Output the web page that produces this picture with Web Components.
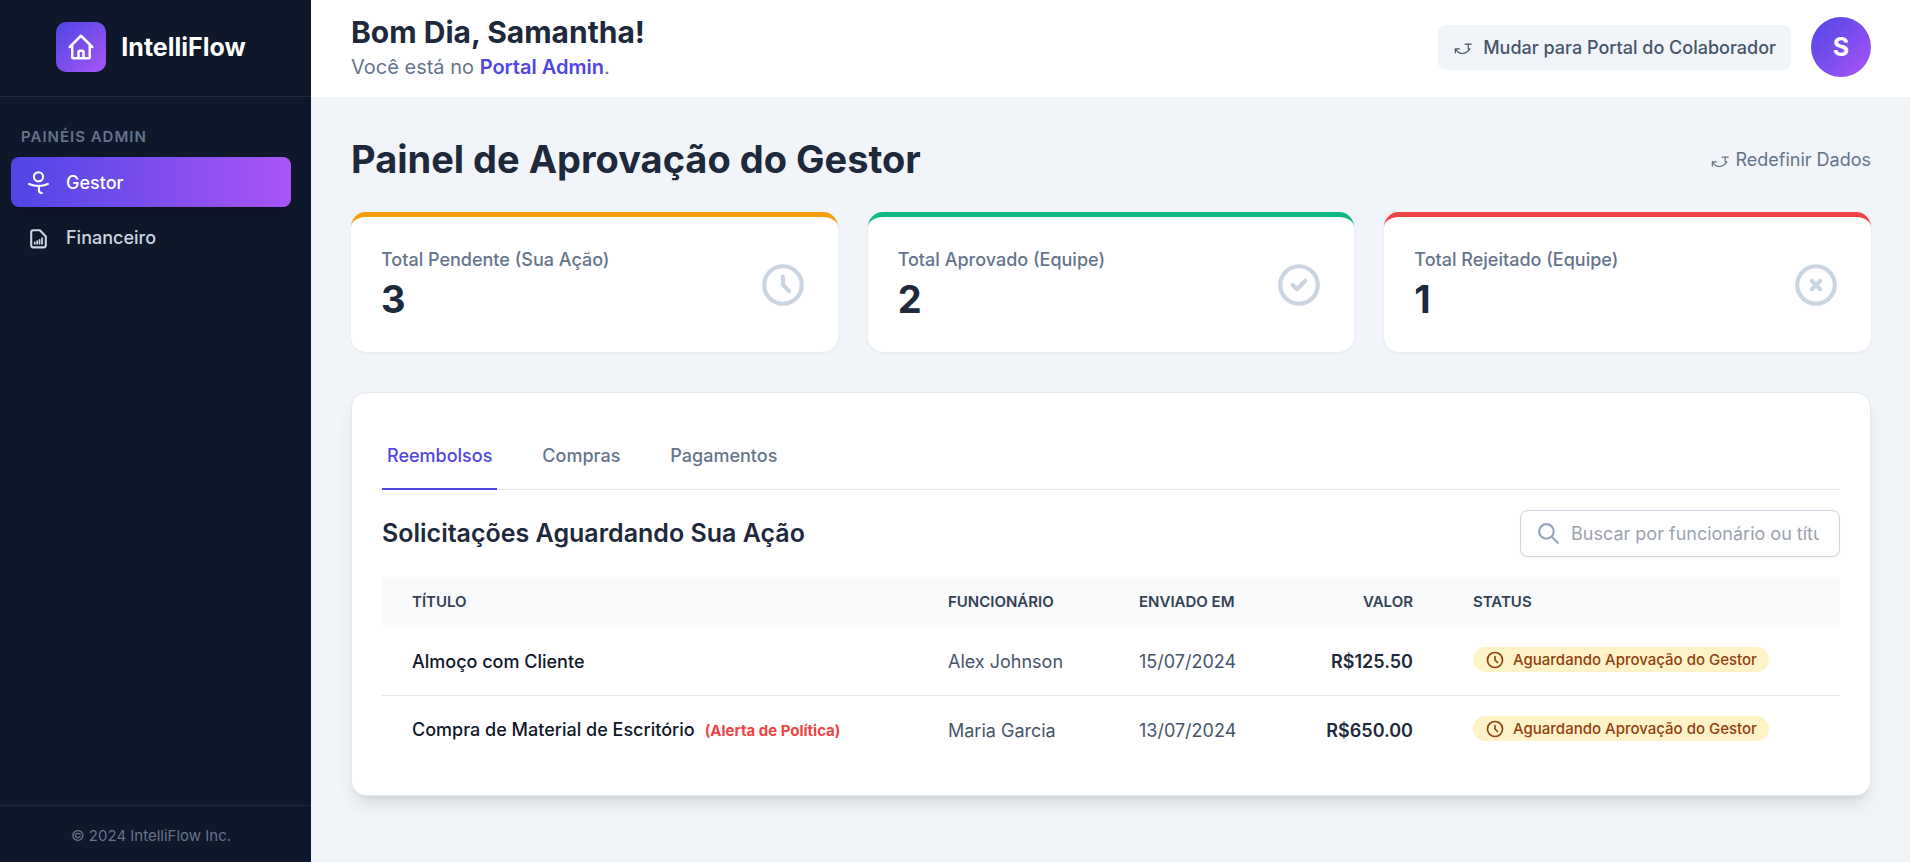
<!DOCTYPE html>
<html lang="pt-BR">
<head>
<meta charset="UTF-8">
<meta name="viewport" content="width=device-width, initial-scale=1.0">
<title>IntelliFlow - Portal Admin</title>
<style>
  :root {
    --brand: #4f46e5;
    --brand-end: #a855f7;
    --slate-50: #f8fafc;
    --slate-100: #f1f5f9;
    --slate-200: #e2e8f0;
    --slate-300: #cbd5e1;
    --slate-400: #94a3b8;
    --slate-500: #64748b;
    --slate-600: #475569;
    --slate-700: #334155;
    --slate-800: #1e293b;
    --slate-900: #0f172a;
    --text-sm: 15px;
    --text-md: 18px;
    --text-title: 38px;
  }

  body {
    margin: 0;
    background: var(--slate-100);
    color: var(--slate-800);
    font-family: Inter, "Liberation Sans", sans-serif;
    font-size: var(--text-md);
    line-height: 25px;
  }
</style>
</head>
<body>

<app-shell>
  <app-sidebar slot="sidebar">
    <nav-item icon="manager" href="#gestor" active>Gestor</nav-item>
    <nav-item icon="report" href="#financeiro">Financeiro</nav-item>
  </app-sidebar>
  <top-bar slot="header" user="Samantha" portal="Portal Admin"></top-bar>

  <page-heading>
    Painel de Aprovação do Gestor
    <icon-button slot="action" icon="swap" variant="plain">Redefinir Dados</icon-button>
  </page-heading>

  <stat-grid>
    <stat-card icon="clock" value="3" color="#f59e0b">Total Pendente (Sua Ação)</stat-card>
    <stat-card icon="check" value="2" color="#10b981">Total Aprovado (Equipe)</stat-card>
    <stat-card icon="reject" value="1" color="#ef4444">Total Rejeitado (Equipe)</stat-card>
  </stat-grid>

  <content-panel>
    <tab-bar tabs="Reembolsos,Compras,Pagamentos" selected="0"></tab-bar>
    <list-toolbar>
      Solicitações Aguardando Sua Ação
      <search-box slot="search" placeholder="Buscar por funcionário ou título..."></search-box>
    </list-toolbar>
    <request-table></request-table>
  </content-panel>
</app-shell>

<script>
const ICONS = {
  home: '<path d="M3 12l2-2m0 0l7-7 7 7M5 10v10a1 1 0 001 1h3m10-11l2 2m-2-2v10a1 1 0 01-1 1h-3m-6 0a1 1 0 001-1v-4a1 1 0 011-1h2a1 1 0 011 1v4a1 1 0 001 1m-6 0h6"/>',
  manager: '<circle cx="12" cy="6.5" r="4.4"/><path d="M2.9 13.4c5.4 2.3 12.8 2.3 18.2 0M12.4 15.2v4.2c0 1.8.7 2.6 2.8 2.6"/>',
  report: '<path d="M7 5h6.3l5.7 6v8.5a2 2 0 01-2 2H7a2 2 0 01-2-2V7a2 2 0 012-2z"/><path stroke-width="1.7" d="M8.4 18v-1.2M10.7 18v-2.5M13 18v-3.8M15.4 18v-5.3"/>',
  swap: '<path stroke-width="1.5" d="M2.800 19v-4.700h4.800M3 14.500c3.500 7 12.500 7.300 17.300-.5M14.600 8.600h7.200M18.300 8.600v5.600"/>',
  clock: '<path d="M12 8v4l3 3m6-3a9 9 0 11-18 0 9 9 0 0118 0z"/>',
  check: '<path d="M9 12l2 2 4-4m6 2a9 9 0 11-18 0 9 9 0 0118 0z"/>',
  reject: '<path d="M10 14l2-2m0 0l2-2m-2 2l-2-2m2 2l2 2m7-2a9 9 0 11-18 0 9 9 0 0118 0z"/>',
  search: '<path d="M21 21l-6-6m2-5a7 7 0 11-14 0 7 7 0 0114 0z"/>'
};

class AppIcon extends HTMLElement {
  constructor() {
    super();
    this.attachShadow({ mode: 'open' });
  }

  connectedCallback() {
    this.shadowRoot.innerHTML = `
      <style>
        :host { display: block; flex: none; width: var(--icon-size, 25px); height: var(--icon-size, 25px); }
        svg { display: block; width: 100%; height: 100%; }
      </style>
      <svg viewBox="0 0 24 24" fill="none" stroke="currentColor" stroke-width="2"
        stroke-linecap="round" stroke-linejoin="round" aria-hidden="true">${ICONS[this.getAttribute('name')] || ''}</svg>
    `;
  }
}
customElements.define('app-icon', AppIcon);

class AppShell extends HTMLElement {
  constructor() {
    super();
    this.attachShadow({ mode: 'open' });
    this.shadowRoot.innerHTML = `
      <style>
        :host { display: flex; min-height: 100vh; }
        .column { flex: 1; min-width: 0; }
        main { padding: 40px 39px 40px 40px; }
      </style>
      <slot name="sidebar"></slot>
      <div class="column">
        <slot name="header"></slot>
        <main><slot></slot></main>
      </div>
    `;
  }
}
customElements.define('app-shell', AppShell);

class AppSidebar extends HTMLElement {
  constructor() {
    super();
    this.attachShadow({ mode: 'open' });
    this.shadowRoot.innerHTML = `
      <style>
        :host {
          display: flex;
          flex-direction: column;
          flex: none;
          position: sticky;
          top: 0;
          width: 311px;
          height: 100vh;
          background: var(--slate-900);
          color: var(--slate-300);
        }
        header {
          display: flex;
          align-items: center;
          justify-content: center;
          gap: 15px;
          box-sizing: border-box;
          height: 97px;
          padding: 0 9px 2px 0;
          border-bottom: 1px solid var(--slate-800);
          color: #fff;
          font-size: 25px;
          font-weight: 700;
        }
        .logo {
          padding: 10px;
          border-radius: 10px;
          background: linear-gradient(to bottom right, var(--brand), var(--brand-end));
          --icon-size: 30px;
        }
        nav {
          display: flex;
          flex-direction: column;
          gap: 5px;
          flex: 1;
          padding: 30px 20px 0 11px;
        }
        h2 {
          margin: 0 0 5px;
          padding: 0 10px;
          color: var(--slate-500);
          font-size: var(--text-sm);
          font-weight: 600;
          line-height: 20px;
          letter-spacing: 1px;
          text-transform: uppercase;
        }
        footer {
          padding: 20px 9px 16px 0;
          border-top: 1px solid var(--slate-800);
          color: var(--slate-500);
          font-size: var(--text-sm);
          line-height: 20px;
          text-align: center;
        }
      </style>
      <header>
        <div class="logo"><app-icon name="home"></app-icon></div>
        <span>IntelliFlow</span>
      </header>
      <nav>
        <h2>Painéis Admin</h2>
        <slot></slot>
      </nav>
      <footer>© 2024 IntelliFlow Inc.</footer>
    `;
  }
}
customElements.define('app-sidebar', AppSidebar);

class NavItem extends HTMLElement {
  constructor() {
    super();
    this.attachShadow({ mode: 'open' });
  }

  connectedCallback() {
    this.shadowRoot.innerHTML = `
      <style>
        :host { display: block; }
        a {
          display: flex;
          align-items: center;
          gap: 15px;
          height: 50px;
          padding: 0 15px;
          border-radius: 8px;
          color: var(--slate-300);
          font-weight: 500;
          text-decoration: none;
        }
        :host([active]) a {
          background: linear-gradient(to right, var(--brand), var(--brand-end));
          box-shadow: 0 12px 19px -4px rgba(0, 0, 0, 0.1), 0 5px 7px -5px rgba(0, 0, 0, 0.1);
          color: #fff;
        }
      </style>
      <a href="${this.getAttribute('href')}">
        <app-icon name="${this.getAttribute('icon')}"></app-icon>
        <slot></slot>
      </a>
    `;
  }
}
customElements.define('nav-item', NavItem);

class IconButton extends HTMLElement {
  constructor() {
    super();
    this.attachShadow({ mode: 'open' });
  }

  connectedCallback() {
    this.shadowRoot.innerHTML = `
      <style>
        :host { display: block; --icon-size: 20px; }
        button {
          display: flex;
          align-items: center;
          gap: 10px;
          padding: 10px 15px;
          border: 0;
          border-radius: 8px;
          background: var(--slate-100);
          color: var(--slate-600);
          font: inherit;
          font-weight: 500;
          cursor: pointer;
        }
        :host([variant="plain"]) button {
          gap: 5px;
          padding: 0;
          background: none;
          color: var(--slate-500);
          font-weight: 400;
        }
      </style>
      <button type="button">
        <app-icon name="${this.getAttribute('icon')}"></app-icon>
        <slot></slot>
      </button>
    `;
  }
}
customElements.define('icon-button', IconButton);

class TopBar extends HTMLElement {
  constructor() {
    super();
    this.attachShadow({ mode: 'open' });
  }

  connectedCallback() {
    const user = this.getAttribute('user');
    this.shadowRoot.innerHTML = `
      <style>
        :host { display: block; }
        header {
          display: flex;
          align-items: center;
          justify-content: space-between;
          box-sizing: border-box;
          height: 97px;
          padding: 0 39px 3px 40px;
          background: #fff;
        }
        h1 { margin: 0; font-size: 30px; font-weight: 700; line-height: 40px; }
        p { margin: 0; color: var(--slate-500); font-size: 20px; line-height: 30px; }
        strong { color: var(--brand); font-weight: 600; }
        .actions { display: flex; align-items: center; gap: 20px; }
        .avatar {
          display: flex;
          align-items: center;
          justify-content: center;
          width: 60px;
          height: 60px;
          border-radius: 50%;
          background: linear-gradient(to bottom right, var(--brand), var(--brand-end));
          color: #fff;
          font-size: 25px;
          font-weight: 700;
        }
      </style>
      <header>
        <div>
          <h1>Bom Dia, ${user}!</h1>
          <p>Você está no <strong>${this.getAttribute('portal')}</strong>.</p>
        </div>
        <div class="actions">
          <icon-button icon="swap">Mudar para Portal do Colaborador</icon-button>
          <div class="avatar">${user[0]}</div>
        </div>
      </header>
    `;
  }
}
customElements.define('top-bar', TopBar);

class PageHeading extends HTMLElement {
  constructor() {
    super();
    this.attachShadow({ mode: 'open' });
    this.shadowRoot.innerHTML = `
      <style>
        :host { display: flex; align-items: center; justify-content: space-between; margin-bottom: 30px; }
        h2 { margin: 0; font-size: var(--text-title); font-weight: 700; line-height: 45px; }
      </style>
      <h2><slot></slot></h2>
      <slot name="action"></slot>
    `;
  }
}
customElements.define('page-heading', PageHeading);

class StatGrid extends HTMLElement {
  constructor() {
    super();
    this.attachShadow({ mode: 'open' });
    this.shadowRoot.innerHTML = `
      <style>
        :host { display: grid; grid-template-columns: repeat(3, 1fr); gap: 30px; margin-bottom: 40px; }
      </style>
      <slot></slot>
    `;
  }
}
customElements.define('stat-grid', StatGrid);

class StatCard extends HTMLElement {
  constructor() {
    super();
    this.attachShadow({ mode: 'open' });
  }

  connectedCallback() {
    this.shadowRoot.innerHTML = `
      <style>
        :host {
          display: flex;
          align-items: center;
          justify-content: space-between;
          padding: 30px;
          border-top: 5px solid ${this.getAttribute('color')};
          border-radius: 15px;
          background: #fff;
          box-shadow: 0 1px 3px rgba(0, 0, 0, 0.06);
        }
        .label { margin: 0 0 5px; color: var(--slate-500); font-weight: 500; }
        .value { margin: 0; font-size: var(--text-title); font-weight: 700; line-height: 45px; }
        app-icon { --icon-size: 50px; color: var(--slate-300); }
      </style>
      <div>
        <p class="label"><slot></slot></p>
        <p class="value">${this.getAttribute('value')}</p>
      </div>
      <app-icon name="${this.getAttribute('icon')}"></app-icon>
    `;
  }
}
customElements.define('stat-card', StatCard);

class ContentPanel extends HTMLElement {
  constructor() {
    super();
    this.attachShadow({ mode: 'open' });
    this.shadowRoot.innerHTML = `
      <style>
        :host {
          display: block;
          padding: 30px;
          border: 1px solid var(--slate-200);
          border-radius: 15px;
          background: #fff;
          box-shadow: 0 12px 19px -4px rgba(0, 0, 0, 0.1), 0 5px 7px -5px rgba(0, 0, 0, 0.1);
        }
      </style>
      <slot></slot>
    `;
  }
}
customElements.define('content-panel', ContentPanel);

class TabBar extends HTMLElement {
  constructor() {
    super();
    this.attachShadow({ mode: 'open' });
  }

  connectedCallback() {
    this.render();
    this.shadowRoot.addEventListener('click', e => {
      const tab = e.target.closest('button');
      if (!tab) return;
      this.setAttribute('selected', tab.dataset.index);
      this.render();
    });
  }

  render() {
    const selected = Number(this.getAttribute('selected'));
    const tabs = this.getAttribute('tabs').split(',');
    this.shadowRoot.innerHTML = `
      <style>
        :host { display: block; margin-bottom: 20px; }
        div { display: flex; gap: 40px; border-bottom: 1px solid var(--slate-200); }
        button {
          margin: 0 0 -1px;
          padding: 20px 5px;
          border: 0;
          border-bottom: 2px solid transparent;
          background: none;
          color: var(--slate-500);
          font: inherit;
          font-weight: 500;
          cursor: pointer;
        }
        button[aria-selected="true"] { border-color: var(--brand); color: var(--brand); }
      </style>
      <div role="tablist">
        ${tabs.map((tab, i) => `<button type="button" role="tab" data-index="${i}" aria-selected="${i === selected}">${tab}</button>`).join('')}
      </div>
    `;
  }
}
customElements.define('tab-bar', TabBar);

class ListToolbar extends HTMLElement {
  constructor() {
    super();
    this.attachShadow({ mode: 'open' });
    this.shadowRoot.innerHTML = `
      <style>
        :host { display: flex; align-items: center; justify-content: space-between; margin-bottom: 20px; }
        h3 { margin: 0; font-size: 25px; font-weight: 600; line-height: 35px; }
      </style>
      <h3><slot></slot></h3>
      <slot name="search"></slot>
    `;
  }
}
customElements.define('list-toolbar', ListToolbar);

class SearchBox extends HTMLElement {
  constructor() {
    super();
    this.attachShadow({ mode: 'open' });
  }

  connectedCallback() {
    this.shadowRoot.innerHTML = `
      <style>
        :host { display: block; }
        label {
          display: flex;
          align-items: center;
          gap: 10px;
          box-sizing: border-box;
          width: 320px;
          padding: 10px 20px 10px 15px;
          border: 1px solid var(--slate-300);
          border-radius: 8px;
          background: #fff;
          box-shadow: 0 1px 2px rgba(0, 0, 0, 0.05);
          color: var(--slate-400);
        }
        input {
          flex: 1;
          min-width: 0;
          height: 25px;
          padding: 0;
          border: 0;
          outline: 0;
          background: none;
          color: var(--slate-800);
          font: inherit;
        }
        input::placeholder { color: #9ca3af; }
      </style>
      <label>
        <app-icon name="search"></app-icon>
        <input type="text" aria-label="Buscar" placeholder="${this.getAttribute('placeholder')}">
      </label>
    `;
  }
}
customElements.define('search-box', SearchBox);

class StatusPill extends HTMLElement {
  constructor() {
    super();
    this.attachShadow({ mode: 'open' });
    this.shadowRoot.innerHTML = `
      <style>
        :host {
          display: inline-flex;
          align-items: center;
          gap: 8px;
          padding: 0 12px;
          border-radius: 13px;
          background: #fef3c7;
          color: #92400e;
          font-size: var(--text-sm);
          font-weight: 500;
          vertical-align: top;
          --icon-size: 20px;
        }
      </style>
      <app-icon name="clock"></app-icon>
      <slot></slot>
    `;
  }
}
customElements.define('status-pill', StatusPill);

const REQUESTS = [
  { title: 'Almoço com Cliente', employee: 'Alex Johnson', date: '15/07/2024', amount: 125.5, status: 'Aguardando Aprovação do Gestor' },
  { title: 'Compra de Material de Escritório', alert: true, employee: 'Maria Garcia', date: '13/07/2024', amount: 650, status: 'Aguardando Aprovação do Gestor' }
];

class RequestTable extends HTMLElement {
  constructor() {
    super();
    this.attachShadow({ mode: 'open' });
  }

  connectedCallback() {
    const rows = REQUESTS.map(r => `
      <tr>
        <td class="title">${r.title}${r.alert ? '<span class="alert">(Alerta de Política)</span>' : ''}</td>
        <td>${r.employee}</td>
        <td>${r.date}</td>
        <td class="amount">R$${r.amount.toFixed(2)}</td>
        <td class="status"><status-pill>${r.status}</status-pill></td>
      </tr>
    `).join('');

    this.shadowRoot.innerHTML = `
      <style>
        :host { display: block; }
        table { width: 100%; border-spacing: 0; text-align: left; }
        /* preferred widths, scaled up together when the table is wider */
        .c-title { width: 536px; }
        .c-employee { width: 191px; }
        .c-date { width: 172px; }
        .c-amount { width: 162px; }
        .c-status { width: 397px; }
        th {
          padding: 15px 30px;
          background: var(--slate-50);
          color: var(--slate-700);
          font-size: var(--text-sm);
          font-weight: 600;
          line-height: 20px;
          text-transform: uppercase;
        }
        td {
          height: 28px;
          padding: 20px 30px;
          border-bottom: 1px solid var(--slate-200);
          color: var(--slate-600);
          white-space: nowrap;
        }
        tr:last-child td { border-color: transparent; }
        .title { color: var(--slate-900); font-weight: 500; }
        .alert { margin-left: 10px; color: #ef4444; font-size: var(--text-sm); font-weight: 700; }
        .amount { text-align: right; }
        td.amount { color: var(--slate-800); font-weight: 600; }
        .status { vertical-align: top; }
      </style>
      <table>
        <colgroup>
          <col class="c-title"><col class="c-employee"><col class="c-date"><col class="c-amount"><col class="c-status">
        </colgroup>
        <thead>
          <tr>
            <th scope="col">Título</th>
            <th scope="col">Funcionário</th>
            <th scope="col">Enviado em</th>
            <th scope="col" class="amount">Valor</th>
            <th scope="col">Status</th>
          </tr>
        </thead>
        <tbody>${rows}</tbody>
      </table>
    `;
  }
}
customElements.define('request-table', RequestTable);
</script>
</body>
</html>
